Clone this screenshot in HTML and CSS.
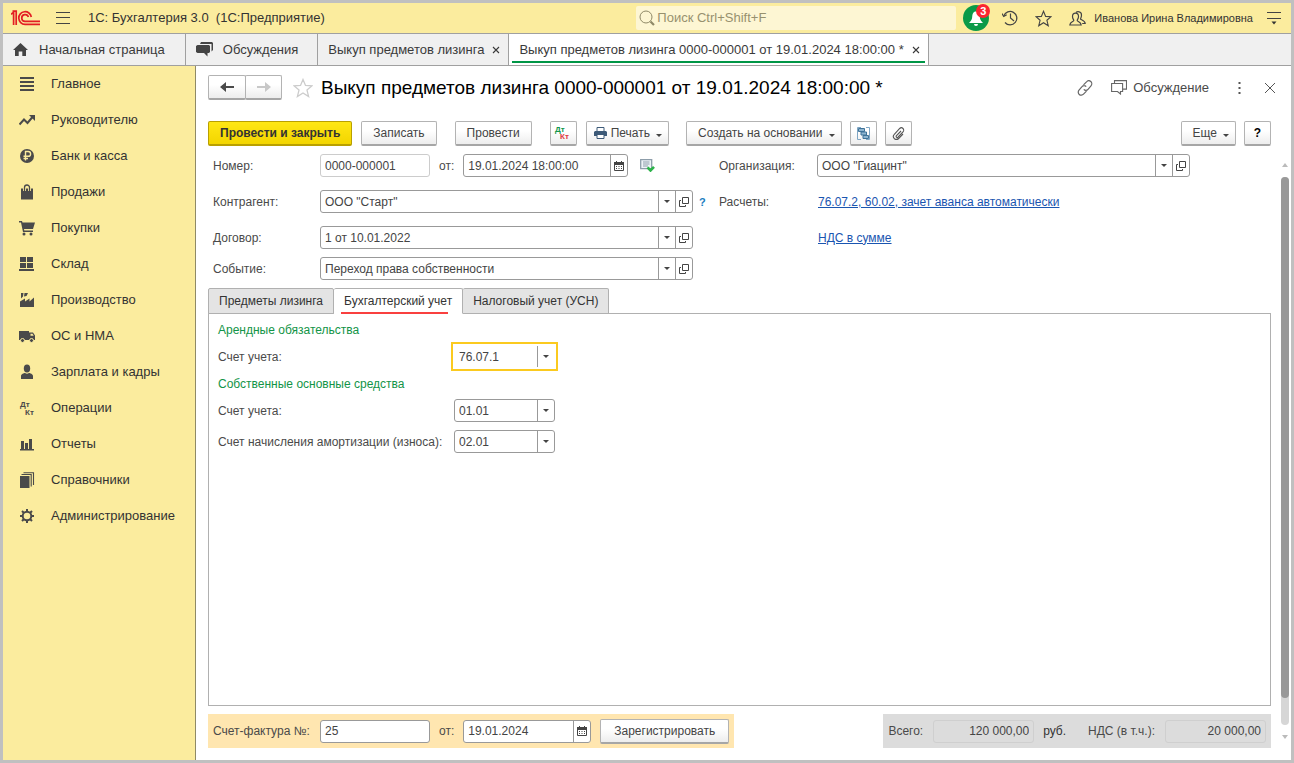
FILE: index.html
```html
<!DOCTYPE html>
<html lang="ru">
<head>
<meta charset="utf-8">
<title>Выкуп предметов лизинга 0000-000001</title>
<link rel="stylesheet" href="styles.css">
</head>
<body>
<svg class="sprite" aria-hidden="true">
  <symbol id="caret" viewBox="0 0 6 3"><path d="M0 0h6L3 3z" fill="currentColor"/></symbol>
  <symbol id="open" viewBox="0 0 10 10"><path d="M3.500.5h6v6h-6zM2 3.500H.5v6h6V8" fill="none" stroke="currentColor"/></symbol>
  <symbol id="calendar" viewBox="0 0 10 10"><path d="M.5 1.500h9v8h-9z" fill="#fff" stroke="currentColor"/><path d="M0 1h10v3H0zM2 0h1v2H2zM7 0h1v2H7z" fill="currentColor"/><path d="M2 5h1v1H2zM4.500 5h1v1h-1zM7 5h1v1H7zM2 7h1v1H2zM4.500 7h1v1h-1zM7 7h1v1H7z" fill="currentColor"/></symbol>
  <symbol id="cross" viewBox="0 0 8 8"><path d="M1 1l6 6M7 1L1 7" stroke="currentColor" stroke-width="1.100" fill="none"/></symbol>
  <symbol id="star" viewBox="0 0 20 20"><path d="M10 1.500l2.500 6 6.300.4-4.800 4.200 1.600 6.400L10 15l-5.600 3.500L6 12.100 1.200 7.900l6.300-.4z" fill="none" stroke="currentColor" stroke-width="1.300"/></symbol>
</svg>
<div class="app">
  <header class="topbar">
    <svg class="logo" viewBox="0 0 29 16" width="29" height="16" fill="none" stroke="#e31e24" stroke-width="1.700"><path d="M0 4.300L2.600 2.300V15M1.500 1.200H5.200V15"/><path d="M20.300 7A6.300 6.300 0 1 0 14 14.300H29"/><path d="M17.400 7A3.400 3.400 0 1 0 14 11.400H29"/></svg>
    <button class="plain menu" aria-label="Меню"><svg viewBox="0 0 14 12" width="14" height="12"><path d="M0 .5h14M0 5.500h14M0 11.500h14" stroke="#444"/></svg></button>
    <span class="app-name">1С: Бухгалтерия 3.0&nbsp; (1С:Предприятие)</span>
    <label class="search">
      <svg viewBox="0 0 16 16" width="16" height="16" fill="none" stroke="#8f8968"><circle cx="7" cy="7" r="6"/><path d="M11.500 11.500l3.500 3.500" stroke-width="2.200"/></svg>
      <input type="search" placeholder="Поиск Ctrl+Shift+F" aria-label="Поиск">
    </label>
    <button class="plain bell" aria-label="Оповещения"><svg viewBox="0 0 26 26" width="26" height="26"><circle cx="13" cy="13" r="13" fill="#0a9a48"/><path d="M13 6.500c-3 0-3.600 2.500-3.800 5.500-.2 3-1.700 4-3.200 6h14c-1.500-2-3-3-3.200-6-.2-3-.8-5.500-3.800-5.500zM11 19h4a2 2 0 0 1-4 0z" fill="#fff"/></svg><span class="badge">3</span></button>
    <button class="plain" aria-label="История"><svg viewBox="0 0 16 16" width="16" height="16" fill="none" stroke="#444" stroke-width="1.200"><path d="M1.800 6A6.700 6.700 0 1 1 3 12.500M8.500 3.500V8l3.500 3"/><path d="M0 3.500l1.700 3 3-1.700"/></svg></button>
    <button class="plain" aria-label="Избранное"><svg class="c-dark" width="17" height="17"><use href="#star"/></svg></button>
    <button class="plain" aria-label="Пользователи"><svg viewBox="0 0 17 15" width="17" height="15" fill="none" stroke="#444" stroke-width="1.200"><path d="M7 1.700C8 .3 12.500 0 12.500 4c0 2.500-1 3.300-1 4s4.500 1.500 4.700 4.500h-3"/><path d="M3.500 5.500c0-4.500 6-4.500 6 0 0 2.500-1.300 3-1.300 4s3.800 1.500 4 4.500H.8c.2-3 4-3.500 4-4.500s-1.300-1.500-1.300-4z"/></svg></button>
    <span class="user">Иванова Ирина Владимировна</span>
    <button class="plain" aria-label="Настройки"><svg viewBox="0 0 14 13" width="14" height="13"><path d="M0 .5h14M0 6.500h14" stroke="#444"/><path d="M4.500 9.500h5L7 12.500z" fill="#333"/></svg></button>
  </header>

  <nav class="tabs" aria-label="Открытые окна">
    <a class="tab tab-home" href="#"><svg viewBox="0 0 15 13" width="15" height="13" fill="#444"><path d="M7.500 0L15 7h-2v6H9.300V8.500H5.700V13H2V7H0z"/></svg>Начальная страница</a>
    <a class="tab tab-talk" href="#"><svg viewBox="0 0 17 15" width="17" height="15" fill="#444"><path d="M5 0h11l1 1v7l-1.500 1.500V2H4z"/><path d="M1.500 3h11.500l1 1v6l-1 1h-1.500V14.500L8 11H1.500L0 10V4z"/></svg>Обсуждения</a>
    <a class="tab" href="#">Выкуп предметов лизинга<svg width="8" height="8"><use href="#cross"/></svg></a>
    <a class="tab active" href="#">Выкуп предметов лизинга 0000-000001 от 19.01.2024 18:00:00 *<svg width="8" height="8"><use href="#cross"/></svg></a>
  </nav>

  <div class="body">
    <nav class="side" aria-label="Разделы">
      <a href="#"><svg viewBox="0 0 16 16" fill="#4a4a4a"><path d="M1 1h14v2H1zM1 5h14v2H1zM1 9h14v2H1zM1 13h14v2H1z"/></svg>Главное</a>
      <a href="#"><svg viewBox="0 0 16 16" fill="none" stroke="#4a4a4a" stroke-width="2"><path d="M.5 12.500L5 7.500l3.500 3.500 5-6"/><path d="M10 3h6v6z" fill="#4a4a4a" stroke="none"/></svg>Руководителю</a>
      <a href="#"><svg viewBox="0 0 16 16"><circle cx="8" cy="8" r="7" fill="#4a4a4a"/><path d="M6.500 12.500v-9h2.700a2.300 2.300 0 0 1 0 4.800H4.500M4.500 10.500H9" fill="none" stroke="#fbec9e" stroke-width="1.400"/></svg>Банк и касса</a>
      <a href="#"><svg viewBox="0 0 16 16"><path d="M2 4.500h12v11H2z" fill="#4a4a4a"/><path d="M5.500 7V3.500a2.500 2.500 0 0 1 5 0V7" fill="none" stroke="#fbec9e" stroke-width="3"/><path d="M5.500 7V3.500a2.500 2.500 0 0 1 5 0V7" fill="none" stroke="#4a4a4a" stroke-width="1.300"/></svg>Продажи</a>
      <a href="#"><svg viewBox="0 0 16 16" fill="#4a4a4a"><path d="M0 1h3l.5 1.500H16L14 9H5l.3 1.500H14V12H4L2 2.500H0z"/><circle cx="5" cy="14" r="1.500"/><circle cx="12" cy="14" r="1.500"/></svg>Покупки</a>
      <a href="#"><svg viewBox="0 0 16 16" fill="#4a4a4a"><path d="M1 1h6v5H1zM8 1h6v5H8zM1 7h6v5H1zM8 7h6v5H8zM0 13h15v2H0z"/></svg>Склад</a>
      <a href="#"><svg viewBox="0 0 16 16" fill="#4a4a4a"><path d="M1 15V9.500l5-3v3l4.500-3v3l4.500-4V15zM2 1h2.500L4 4.500 2 6.500zM5.500 1H9L7.500 4l-2.500.5z"/></svg>Производство</a>
      <a href="#"><svg viewBox="0 0 16 16" fill="#4a4a4a"><path d="M0 3h10v9H0zM10 4.500h4l2 3V12h-6z"/><path d="M11.500 5.700h2l1.200 2h-3.200z" fill="#fbec9e"/><circle cx="3.500" cy="12.500" r="2" stroke="#fbec9e"/><circle cx="12.500" cy="12.500" r="2" stroke="#fbec9e"/></svg>ОС и НМА</a>
      <a href="#"><svg viewBox="0 0 16 16" fill="#4a4a4a"><ellipse cx="8" cy="4.500" rx="3.200" ry="4"/><path d="M2 15v-3c0-2 3-3 4-3 1.500 1 2.500 1 4 0 1 0 4 1 4 3v3z"/></svg>Зарплата и кадры</a>
      <a href="#"><svg viewBox="0 0 16 16" class="dtkt" fill="#4a4a4a"><text x="1" y="7">Дт</text><text x="6" y="15">Кт</text></svg>Операции</a>
      <a href="#"><svg viewBox="0 0 16 16" fill="#4a4a4a"><path d="M1 13h14v1.500H1zM2 5h3v8H2zM6 7h3v6H6zM10 3h3v10h-3z"/></svg>Отчеты</a>
      <a href="#"><svg viewBox="0 0 16 16" fill="#4a4a4a"><path d="M1 4h9.500v12H1z"/><path d="M2.500 2.500h9.700V14.500M4.500.7h10V13" fill="none" stroke="#4a4a4a" stroke-width="1.100"/></svg>Справочники</a>
      <a href="#"><svg viewBox="0 0 16 16" fill="none" stroke="#4a4a4a"><circle cx="8" cy="8" r="4.300" stroke-width="2"/><path d="M8 1v3M8 12v3M1 8h3M12 8h3M3 3l2 2M11 11l2 2M13 3l-2 2M5 11l-2 2" stroke-width="2"/></svg>Администрирование</a>
    </nav>

    <main class="page">
      <div class="title-row">
        <div class="nav-buttons">
          <button class="btn" aria-label="Назад"><svg viewBox="0 0 14 10" width="14" height="10" fill="#4a4a4a"><path d="M0 5L6 0v4h8v2H6v4z"/></svg></button>
          <button class="btn" aria-label="Вперед"><svg viewBox="0 0 14 10" width="14" height="10" fill="#c8c8c8"><path d="M14 5L8 0v4H0v2h8v4z"/></svg></button>
        </div>
        <button class="plain fav" aria-label="В избранное"><svg width="20" height="20"><use href="#star"/></svg></button>
        <h1>Выкуп предметов лизинга 0000-000001 от 19.01.2024 18:00:00 *</h1>
        <button class="plain" aria-label="Ссылка"><svg viewBox="0 0 16 16" width="16" height="16" fill="none" stroke="#666" stroke-width="1.200"><path d="M6.500 4.800L9.500 1.800a2.800 2.800 0 0 1 4.500 4L11 9.300a2.700 2.700 0 0 1-4.200 0M9.500 11.200l-3 3a2.800 2.800 0 0 1-4.500-4L5 6.700a2.700 2.700 0 0 1 4.200 0"/></svg></button>
        <button class="plain discuss"><svg viewBox="0 0 16 15" width="16" height="15" fill="none" stroke="#666" stroke-width="1.100"><path d="M.6 3.500h11v8H9.500v2.500L6.500 11.500H.6zM3.500 3V.6h12v8.500H12"/></svg>Обсуждение</button>
        <button class="plain more" aria-label="Еще действия"><svg viewBox="0 0 3 12" width="3" height="12" fill="#555"><path d="M.5 0h2v2h-2zM.5 5h2v2h-2zM.5 10h2v2h-2z"/></svg></button>
        <button class="plain close" aria-label="Закрыть"><svg viewBox="0 0 12 12" width="12" height="12" stroke="#555"><path d="M1 1l10 10M11 1L1 11"/></svg></button>
      </div>

      <div class="toolbar">
        <button class="btn primary">Провести и закрыть</button>
        <button class="btn">Записать</button>
        <button class="btn apart">Провести</button>
        <button class="btn icon apart" aria-label="Дт Кт"><svg viewBox="0 0 16 16" width="16" height="16" class="dtkt"><text x="0" y="7" fill="#12964a">Дт</text><text x="5" y="14" fill="#e0393e">Кт</text></svg></button>
        <button class="btn drop print"><svg viewBox="0 0 13 12" width="13" height="12"><path d="M3 .5h7v4H3z" fill="#fff" stroke="#3d5a78"/><path d="M1 4h11l1 1v4H0V5z" fill="#3d5a78"/><path d="M3 7.500h7v4H3z" fill="#fff" stroke="#3d5a78"/></svg>Печать<svg class="caret" width="6" height="3"><use href="#caret"/></svg></button>
        <div class="group">
          <button class="btn drop">Создать на основании<svg class="caret" width="6" height="3"><use href="#caret"/></svg></button>
          <button class="btn icon" aria-label="Структура подчиненности"><svg viewBox="0 0 13 13" width="13" height="13"><path d="M4 .5H.5v12H4M9 .5h3.500v12H9" fill="none" stroke="#7fa6c4"/><path d="M1.500 1.500h6v3h-6zM4 5h5.500v3H4zM6 8.500h5.500v3H6z" fill="#8fb5d0" stroke="#3f7399"/></svg></button>
          <button class="btn icon" aria-label="Файлы"><svg viewBox="0 0 13 13" width="13" height="13" fill="none" stroke="#555" stroke-width="1.100"><path d="M9 4L4.500 8.700a1 1 0 0 0 1.500 1.500l5-5.400a2.300 2.300 0 0 0-3.300-3.300L2.300 7.300a3 3 0 0 0 4.300 4.200L11 7"/></svg></button>
        </div>
        <div class="group end">
          <button class="btn drop">Еще<svg class="caret" width="6" height="3"><use href="#caret"/></svg></button>
          <button class="btn icon help">?</button>
        </div>
      </div>

      <div class="form">
        <div class="col left">
          <div class="row">
            <label for="num">Номер:</label>
            <span class="field readonly short"><input id="num" value="0000-000001" readonly></span>
            <label class="from" for="date">от:</label>
            <span class="field date-time"><input id="date" value="19.01.2024 18:00:00"><button aria-label="Календарь"><svg width="10" height="10"><use href="#calendar"/></svg></button></span>
            <svg class="status" viewBox="0 0 15 13" width="15" height="13"><path d="M.7.7h11v9H.7z" fill="#eef3f7" stroke="#8d9daa" stroke-width="1.300"/><path d="M3 3h6.500M3 5h6.500M3 7h5" stroke="#8d9daa"/><path d="M7.500 8.300L10.500 11.500 14 7.800" fill="none" stroke="#2db34a" stroke-width="2.600"/></svg>
          </div>
          <div class="row">
            <label for="agent">Контрагент:</label>
            <span class="field wide"><input id="agent" value="ООО &quot;Старт&quot;"><button aria-label="Выбрать"><svg width="6" height="3"><use href="#caret"/></svg></button><button aria-label="Открыть"><svg width="10" height="10"><use href="#open"/></svg></button></span>
            <button class="plain hint" aria-label="Подсказка">?</button>
          </div>
          <div class="row">
            <label for="contract">Договор:</label>
            <span class="field wide"><input id="contract" value="1 от 10.01.2022"><button aria-label="Выбрать"><svg width="6" height="3"><use href="#caret"/></svg></button><button aria-label="Открыть"><svg width="10" height="10"><use href="#open"/></svg></button></span>
          </div>
          <div class="row near">
            <label for="event">Событие:</label>
            <span class="field wide"><input id="event" value="Переход права собственности"><button aria-label="Выбрать"><svg width="6" height="3"><use href="#caret"/></svg></button><button aria-label="Открыть"><svg width="10" height="10"><use href="#open"/></svg></button></span>
          </div>
        </div>
        <div class="col right">
          <div class="row">
            <label for="org">Организация:</label>
            <span class="field wide"><input id="org" value="ООО &quot;Гиацинт&quot;"><button aria-label="Выбрать"><svg width="6" height="3"><use href="#caret"/></svg></button><button aria-label="Открыть"><svg width="10" height="10"><use href="#open"/></svg></button></span>
          </div>
          <div class="row"><span class="label">Расчеты:</span><a class="link" href="#">76.07.2, 60.02, зачет аванса автоматически</a></div>
          <div class="row"><span class="label"></span><a class="link" href="#">НДС в сумме</a></div>
        </div>
      </div>

      <div class="subtabs" role="tablist">
        <button class="subtab" role="tab">Предметы лизинга</button>
        <button class="subtab current" role="tab" aria-selected="true">Бухгалтерский учет</button>
        <button class="subtab" role="tab">Налоговый учет (УСН)</button>
      </div>
      <section class="panel" role="tabpanel">
        <h2>Арендные обязательства</h2>
        <div class="account">
          <label for="acc1">Счет учета:</label>
          <span class="field focused"><input id="acc1" value="76.07.1"><button aria-label="Выбрать"><svg width="6" height="3"><use href="#caret"/></svg></button></span>
        </div>
        <h2>Собственные основные средства</h2>
        <div class="account">
          <label for="acc2">Счет учета:</label>
          <span class="field"><input id="acc2" value="01.01"><button aria-label="Выбрать"><svg width="6" height="3"><use href="#caret"/></svg></button></span>
        </div>
        <div class="account next">
          <label for="acc3">Счет начисления амортизации (износа):</label>
          <span class="field"><input id="acc3" value="02.01"><button aria-label="Выбрать"><svg width="6" height="3"><use href="#caret"/></svg></button></span>
        </div>
      </section>

      <footer class="foot">
        <div class="invoice">
          <label for="inv">Счет-фактура №:</label>
          <span class="field short"><input id="inv" value="25"></span>
          <label class="from" for="invdate">от:</label>
          <span class="field date"><input id="invdate" value="19.01.2024"><button aria-label="Календарь"><svg width="10" height="10"><use href="#calendar"/></svg></button></span>
          <button class="btn register">Зарегистрировать</button>
        </div>
        <div class="totals">
          <label for="sum">Всего:</label>
          <span class="field"><input id="sum" value="120 000,00" readonly></span>
          <span class="currency">руб.</span>
          <label for="vat">НДС (в т.ч.):</label>
          <span class="field"><input id="vat" value="20 000,00" readonly></span>
        </div>
      </footer>
    </main>
    <div class="scroll" aria-hidden="true">
      <svg viewBox="0 0 6 4" width="6" height="4"><path d="M0 4h6L3 0z" fill="#bbb"/></svg>
      <div class="track"><div class="thumb"></div></div>
      <svg viewBox="0 0 6 4" width="6" height="4"><path d="M0 0h6L3 4z" fill="#bbb"/></svg>
    </div>
  </div>
</div>
</body>
</html>
```
FILE: styles.css
```css
* { box-sizing: border-box; }
body { margin: 0; font: 12px/16px "Liberation Sans", Arial, sans-serif; color: #4a4a4a; }
button, input { font: inherit; color: inherit; }
button { margin: 0; }
a { color: inherit; text-decoration: none; }
h1, h2 { margin: 0; font-weight: 400; }
svg { flex: none; display: block; }
.sprite { position: absolute; width: 0; height: 0; }
.app { display: flex; flex-direction: column; min-height: 100vh; border: 3px solid #c0c0c0; background: #fff; }
.plain { display: flex; align-items: center; padding: 0; border: 0; background: none; }

.topbar { display: flex; align-items: center; height: 31px; padding: 0 10px 0 8px; background: #fbec9e; border-bottom: 1px solid #a0a0a0; color: #333; }
.menu { margin: 0 18px 0 16px; }
.app-name { font-size: 13px; white-space: nowrap; }
.search { display: flex; align-items: center; gap: 2px; width: 320px; height: 24px; margin-left: auto; padding: 0 3px; background: #fdf6d3; border-radius: 2px; }
.search input { flex: 1; min-width: 0; padding: 0; border: 0; background: none; font-size: 13px; outline: 0; }
.search input::placeholder { color: #97916f; opacity: 1; }
.topbar .plain { flex: none; }
.bell { position: relative; margin: 0 13px 0 7px; }
.badge { position: absolute; top: -1px; right: -1px; width: 14px; height: 14px; border-radius: 7px; background: #fb2530; color: #fff; font-size: 11px; line-height: 14px; font-weight: 700; text-align: center; }
.bell ~ .plain { margin-right: 17px; }
.topbar .user { margin: 0 14px 0 -9px; font-size: 11px; white-space: nowrap; }
.topbar .user + .plain { margin: 0; }
.c-dark { color: #444; }

.tabs { display: flex; height: 32px; background: #f0f0f0; border-bottom: 1px solid #a0a0a0; color: #3a3a3a; }
.tab { position: relative; display: flex; align-items: center; gap: 8px; padding: 0 8px 0 10px; border-right: 1px solid #a0a0a0; white-space: nowrap; font-size: 13px; }
.tab-home, .tab-talk { gap: 11px; padding-right: 20px; }
.tab-talk { gap: 10px; padding-right: 19px; }
.active { background: #fff; }
.active::after { content: ""; position: absolute; left: 3px; right: 3px; bottom: 2px; height: 2px; background: #009646; }

.body { display: flex; flex: 1; }
.side { flex: none; width: 193px; background: #fbec9e; border-right: 1px solid #8f8a66; color: #333; font-size: 13px; }
.side a { display: flex; align-items: center; gap: 16px; height: 36px; padding-left: 16px; white-space: nowrap; }
.side svg { width: 16px; height: 16px; }
.dtkt { font: 700 8px "Liberation Sans", Arial, sans-serif; overflow: visible; }

.page { display: flex; flex-direction: column; flex: 1; min-width: 0; padding: 9px 10px 12px 12px; }
.title-row { display: flex; align-items: center; height: 25px; margin: 0 -5px 21px 0; }
.title-row > .plain { margin-left: 18px; }
.title-row > .fav { margin: 0 8px 0 11px; color: #ccc; }
.title-row h1 { flex: 1; color: #000; font-size: 19px; line-height: 24px; white-space: nowrap; }
.discuss { gap: 6px; font-size: 13px; }
.title-row > .more { margin-left: 29px; }
.title-row > .close { margin-left: 23px; }
.btn { display: flex; align-items: center; justify-content: center; height: 25px; padding: 0 11px; border: 1px solid #b3b3b3; border-bottom: 2px solid #a6a6a6; border-radius: 2px; background: linear-gradient(#fff 40%, #ededed); white-space: nowrap; color: #444; }
.nav-buttons { display: flex; }
.nav-buttons .btn { width: 38px; padding: 0; }
.nav-buttons .btn + .btn { width: 37px; margin-left: -1px; }
.toolbar { display: flex; gap: 9px; margin-bottom: 8px; }
.group { display: flex; gap: 8px; margin-left: 8px; }
.end { margin-left: auto; }
.apart { margin-left: 9px; }
.primary { border-color: #b9a000; background: linear-gradient(#ffe714, #f3d500); font-weight: 700; color: #333; }
.toolbar .icon { width: 27px; padding: 0; }
.drop { padding-right: 6px; }
.print { gap: 4px; padding-left: 7px; }
.caret { margin: 5px 0 0 6px; }
.print .caret { margin-left: 2px; }
.help { color: #000; font-weight: 700; }

.form { display: flex; gap: 13px; margin-bottom: 8px; }
.col { display: flex; flex-direction: column; gap: 13px; }
.left { width: 498px; padding-left: 5px; }
.row { display: flex; align-items: center; height: 23px; }
.row.near { margin-top: -5px; }
.row > label:first-child { flex: none; width: 107px; }
.right .row > :first-child { flex: none; width: 98px; }
.row .link { padding-left: 1px; }
.field { display: flex; height: 23px; border: 1px solid #999; border-radius: 3px; background: #fff; overflow: hidden; color: #444; }
.field input { flex: 1; width: 0; min-width: 0; padding: 0 4px; border: 0; outline: 0; background: none; }
.field button { display: flex; align-items: center; justify-content: center; width: 17px; padding: 0; border: 0; border-left: 1px solid #999; background: none; color: #444; }
.row .wide { flex: none; width: 373px; }
.short { width: 110px; }
.readonly { border-color: #ccc; }
.from { padding: 0 9px; }
.date-time { width: 165px; }
.date { width: 128px; }
.status { margin-left: 12px; }
.hint { margin-left: 6px; font-weight: 700; font-size: 11px; color: #1a7dc0; }
.link { color: #1a55b0; text-decoration: underline; white-space: nowrap; }

.subtabs { display: flex; height: 25px; }
.subtab { position: relative; height: 26px; padding: 0 10px; border: 1px solid #b0b0b0; border-left-width: 0; border-radius: 2px 2px 0 0; background: #e4e4e4; color: #333; white-space: nowrap; }
.subtab:first-child { border-left-width: 1px; }
.subtab.current { background: #fff; border-bottom-color: #fff; }
.current::after { content: ""; position: absolute; left: 7px; right: 14px; bottom: -1px; height: 2px; background: #f9403f; }
.panel { flex: 1; padding: 6px 9px; border: 1px solid #b0b0b0; }
.panel h2 { margin-bottom: 5px; font-size: 12px; line-height: 20px; color: #129447; }
.account { display: grid; grid-template-columns: 236px 101px; align-items: center; margin-bottom: 6px; white-space: nowrap; }
.account.next { margin-top: 8px; }
.panel .focused { outline: 2px solid #fbca1f; outline-offset: 1px; border-color: transparent; border-radius: 0; }

.foot { display: flex; justify-content: space-between; align-items: stretch; margin-top: 8px; }
.invoice, .totals { display: flex; align-items: center; height: 34px; padding: 0 5px; white-space: nowrap; }
.invoice { background: #ffe6b0; }
.invoice label:first-child { width: 107px; }
.register { margin-left: 9px; padding: 0 13px; }
.totals { background: #dcdcdc; }
.totals .field { width: 101px; margin-left: 10px; border-color: #cfcfcf; background: none; }
.totals .field input { text-align: right; }
.currency { margin: 0 22px 0 9px; color: #333; }

.scroll { display: flex; flex-direction: column; align-items: center; flex: none; width: 8px; margin: 97px 2px 21px 0; gap: 10px; }
.track { flex: 1; width: 8px; background: #d6d6d6; border-radius: 4px; }
.thumb { height: 95%; background: #999; border-radius: 4px; }
```
